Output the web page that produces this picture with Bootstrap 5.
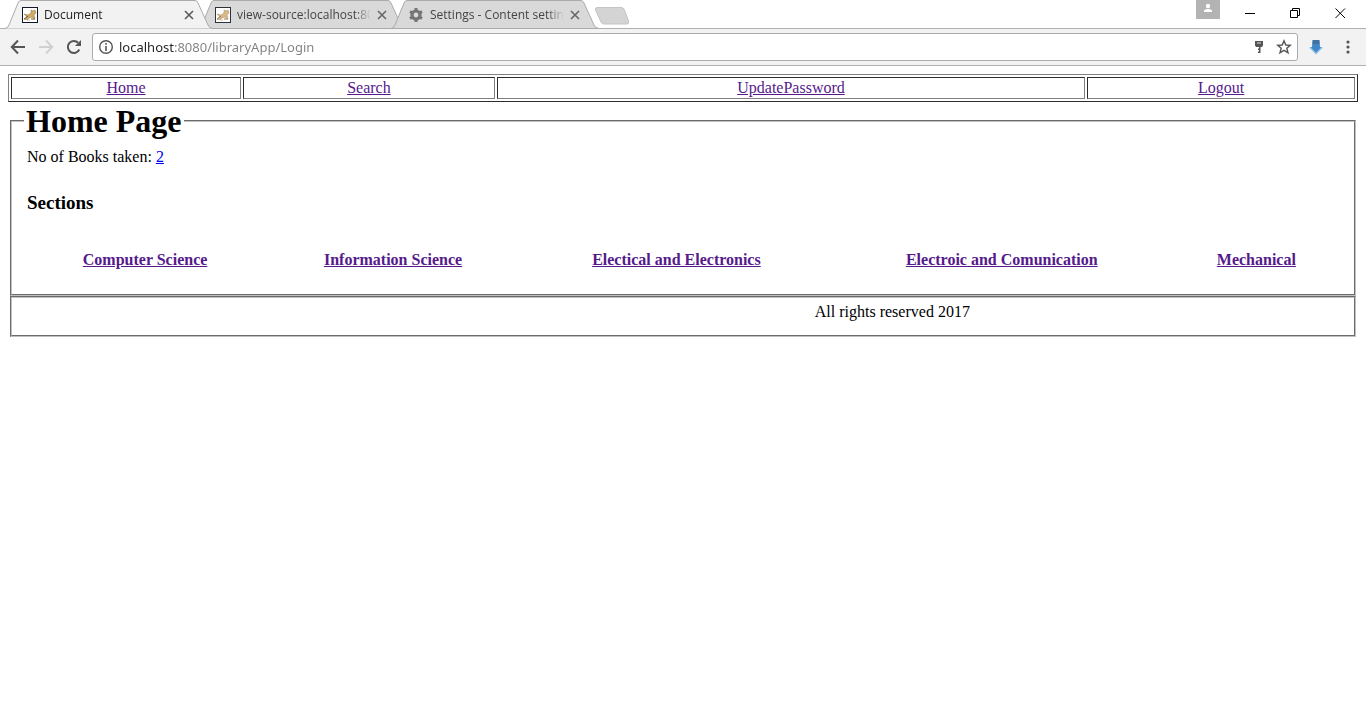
<!DOCTYPE html>
<html lang="en">
<head>
<meta charset="utf-8">
<meta name="viewport" content="width=device-width, initial-scale=1">
<title>Document</title>
<link href="https://cdn.jsdelivr.net/npm/bootstrap@5.3.0/dist/css/bootstrap.min.css" rel="stylesheet">
<style>
  body { font-family: "Liberation Serif", "Times New Roman", serif; font-size: 16px; line-height: 18px; color: #000; background: #fff; }
  .browser { font-family: "Open Sans", "Noto Sans", sans-serif; }
  .browser svg { display: block; flex: none; }
  .browser button { border: 0; background: none; padding: 0; flex: none; }

  /* tab strip */
  .strip { height: 29px; padding-left: 5px; border-bottom: 1px solid #b0b0b0; }
  .tab { width: 208px; height: 29px; margin-right: -15px; padding: 1px 19px 0 17px; font-size: 12px; color: #444; }
  .tab-shape { position: absolute; left: 0; top: 0; }
  .tab-shape path { fill: #d9d9d9; stroke: #ababab; }
  .tab.current { z-index: 2; color: #222; }
  .tab.current .tab-shape path { fill: #f2f2f2; }
  .tab-title { min-width: 0; margin: 0 6px 0 6px; overflow: hidden; white-space: nowrap; -webkit-mask-image: linear-gradient(90deg, #000 88%, transparent); mask-image: linear-gradient(90deg, #000 88%, transparent); }
  .tab > :not(.tab-shape) { position: relative; }
  .tab-new { margin: 7px 0 0 10px; }
  .user-btn { width: 24px; height: 19px; }
  .user-btn svg { background: #b3b3b3; }
  .window-btns { gap: 34px; padding: 8px 20px 0 25px; }

  /* toolbar */
  .toolbar { height: 37px; background: #f2f2f2; border-bottom: 1px solid #b0b0b0; padding: 0 10px 0 10px; }
  .nav-btns { gap: 12px; margin-right: 10px; }
  .omnibox { height: 28px; background: #fff; border: 1px solid #ababab; border-radius: 3px; padding: 0 5px; }
  .address { border: 0; outline: 0; padding: 0; min-width: 0; margin: 0 5px; font-family: "Noto Sans", sans-serif; font-size: 13px; height: 24px; color: transparent; background: linear-gradient(90deg, #222 56px, #808080 56px); -webkit-background-clip: text; background-clip: text; }
  .omnibox .key-btn { margin-right: 9px; }
  .download-btn { margin: 0 16px 0 10px; }

  /* page */
  .page { padding: 8px; }
  .page a { color: #551a8b; }
  .page a.fresh { color: #0000ee; }
  .menu-table { border-collapse: separate; border-spacing: 2px; border: 1px solid; border-color: #808080 #2c2c2c #2c2c2c #808080; }
  .menu-table td { border: 1px solid; border-color: #2c2c2c #808080 #808080 #2c2c2c; padding: 1px; text-align: center; }
  .box { border: 2px groove #c0c0c0; margin: 0 2px; padding: 0 12px; }
  .box-title { font-size: 32px; line-height: 38px; font-weight: bold; padding: 0 2px; margin: 0; }
  .box-body { padding: 8px 3px 25px; }
  .section-title { font-size: 19px; line-height: 22px; font-weight: bold; margin: 26px 0 37px; }
  .section-table th { text-align: center; padding: 0; }
  .rights { padding: 5px 0 14px 60%; }
</style>
</head>
<body>
<header class="browser">
  <div class="strip d-flex">
    <div class="tab current position-relative d-flex align-items-center">
      <svg class="tab-shape" width="208" height="29"><path d="M0 28.500L1 28Q3 27.500 4 25L13 3Q14 .5 16 .5H190Q192 .5 193 3L203 25Q204 28 208 28.500"/></svg>
      <svg width="16" height="16" viewBox="0 0 16 16"><rect x=".5" y=".5" width="15" height="15" fill="#fff" stroke="#101828"/><path d="M2 13 5 10 2 7 6 8 9 6 9 3 11 4 13 3 14 6 12 8 13 12 10 10 7 11 5 13 8 13" fill="#d0ab65" stroke="#8d7143" stroke-width=".5"/><path d="M2 12 6 9M9 12H13" stroke="#6f5732"/></svg>
      <span class="tab-title flex-grow-1">Document</span>
      <button type="button" aria-label="Close tab"><svg width="10" height="10" viewBox="0 0 10 10"><path d="M1 1 9 9M9 1 1 9" stroke="#5a5a5a" stroke-width="1.600"/></svg></button>
    </div>
    <div class="tab position-relative d-flex align-items-center">
      <svg class="tab-shape" width="208" height="29"><path d="M0 28.500L1 28Q3 27.500 4 25L13 3Q14 .5 16 .5H190Q192 .5 193 3L203 25Q204 28 208 28.500Z"/></svg>
      <svg width="16" height="16" viewBox="0 0 16 16"><rect x=".5" y=".5" width="15" height="15" fill="#fff" stroke="#2c333c"/><path d="M2 13 5 10 2 7 6 8 9 6 9 3 11 4 13 3 14 6 12 8 13 12 10 10 7 11 5 13 8 13" fill="#d9b988" stroke="#a58d66" stroke-width=".5"/><path d="M2 12 6 9M9 12H13" stroke="#8f7853"/></svg>
      <span class="tab-title flex-grow-1">view-source:localhost:8080</span>
      <button type="button" aria-label="Close tab"><svg width="10" height="10" viewBox="0 0 10 10"><path d="M1 1 9 9M9 1 1 9" stroke="#666" stroke-width="1.600"/></svg></button>
    </div>
    <div class="tab position-relative d-flex align-items-center">
      <svg class="tab-shape" width="208" height="29"><path d="M0 28.500L1 28Q3 27.500 4 25L13 3Q14 .5 16 .5H190Q192 .5 193 3L203 25Q204 28 208 28.500Z"/></svg>
      <svg width="16" height="16" viewBox="0 0 16 16"><circle cx="8" cy="8" r="4" fill="none" stroke="#757575" stroke-width="3.200"/><path d="M8 1V4M8 12V15M2 4.500 4.500 6M11.500 10 14 11.500M2 11.500 4.500 10M11.500 6 14 4.500" stroke="#757575" stroke-width="3"/></svg>
      <span class="tab-title flex-grow-1">Settings - Content settings</span>
      <button type="button" aria-label="Close tab"><svg width="10" height="10" viewBox="0 0 10 10"><path d="M1 1 9 9M9 1 1 9" stroke="#666" stroke-width="1.600"/></svg></button>
    </div>
    <button type="button" class="tab-new align-self-start" aria-label="New tab"><svg width="36" height="18"><path d="M3 .5H27Q29 .5 30 2L34.500 14Q35 17 33 17H10Q8 17 7 15L1.500 3Q1 .5 3 .5Z" fill="#d4d4d4" stroke="#c4c4c4"/></svg></button>
    <button type="button" class="user-btn ms-auto align-self-start" aria-label="User"><svg width="24" height="19"><circle cx="12" cy="6" r="2.200" fill="#fff"/><path d="M8 12V11Q8 9 12 9T16 11V12Z" fill="#fff"/></svg></button>
    <div class="window-btns d-flex align-self-start">
      <button type="button" aria-label="Minimize"><svg width="11" height="11"><path d="M0 5.500H10" stroke="#000"/></svg></button>
      <button type="button" aria-label="Restore"><svg width="11" height="11"><path d="M.5 2.500H7.500V9.500H.5ZM2.500 2.500V.5H9.500V7.500H7.500" fill="none" stroke="#000"/></svg></button>
      <button type="button" aria-label="Close"><svg width="11" height="11"><path d="M.5 .5 10 10M10 .5 .5 10" stroke="#000"/></svg></button>
    </div>
  </div>
  <div class="toolbar d-flex align-items-center">
    <div class="nav-btns d-flex">
      <button type="button" aria-label="Back"><svg width="16" height="16" viewBox="0 0 16 16"><path d="M15 8H2M8 1.500 1.800 8 8 14.500" fill="none" stroke="#555" stroke-width="2"/></svg></button>
      <button type="button" aria-label="Forward"><svg width="16" height="16" viewBox="0 0 16 16"><path d="M1 8H14M8 1.500 14.200 8 8 14.500" fill="none" stroke="#d0d0d0" stroke-width="2"/></svg></button>
      <button type="button" aria-label="Reload"><svg width="16" height="16" viewBox="0 0 16 16"><path d="M13.300 10.500A6 6 0 1 1 12.200 3.800" fill="none" stroke="#555" stroke-width="2"/><path d="M15 1V7H9Z" fill="#555"/></svg></button>
    </div>
    <form class="omnibox d-flex align-items-center flex-grow-1">
      <svg width="16" height="16" viewBox="0 0 16 16"><circle cx="8" cy="8" r="6.300" fill="none" stroke="#555" stroke-width="1.400"/><path d="M8 7V12M8 4V5.700" stroke="#555" stroke-width="1.600"/></svg>
      <input class="address flex-grow-1" type="text" aria-label="Address" value="localhost:8080/libraryApp/Login">
      <button type="button" class="key-btn" aria-label="Saved passwords"><svg width="16" height="16" viewBox="0 0 16 16"><path d="M4 2H12V6.500L11 8H9.500V14H7V12.500H8V11H7V9.500H8V8H5L4 6.500Z" fill="#555"/><path d="M6 4H10" stroke="#ddd"/></svg></button>
      <button type="button" aria-label="Bookmark this page"><svg width="16" height="16" viewBox="0 0 16 16"><path d="M8 1.800 9.800 6 14.300 6.300 10.800 9.300 12 13.800 8 11.400 4 13.800 5.200 9.300 1.700 6.300 6.200 6Z" fill="none" stroke="#555" stroke-width="1.400"/></svg></button>
    </form>
    <button type="button" class="download-btn" aria-label="Downloads"><svg width="16" height="16" viewBox="0 0 16 16"><path d="M1 8.500 8 15.500 15 8.500 12 8H4Z" fill="#8fc0e8"/><path d="M4.500 1H11.500L12 8H13.500L8 13.500 2.500 8H4Z" fill="#3f87c6"/><path d="M5 1H11L11.500 5H4.500Z" fill="#41729f"/></svg></button>
    <button type="button" aria-label="Menu"><svg width="16" height="16"><g fill="#555"><circle cx="8" cy="3" r="1.600"/><circle cx="8" cy="8" r="1.600"/><circle cx="8" cy="13" r="1.600"/></g></svg></button>
  </div>
</header>

<main class="page">
  <table class="menu-table w-100">
    <colgroup><col style="width:17.2%"><col style="width:18.8%"><col style="width:44%"><col style="width:20%"></colgroup>
    <tr><td><a href="#">Home</a></td><td><a href="#">Search</a></td><td><a href="#">UpdatePassword</a></td><td><a href="#">Logout</a></td></tr>
  </table>
  <fieldset class="box">
    <legend class="box-title float-none w-auto">Home Page</legend>
    <div class="box-body">
      <div>No of Books taken: <a class="fresh" href="#">2</a></div>
      <h3 class="section-title">Sections</h3>
      <table class="section-table w-100">
        <colgroup><col style="width:18%"><col style="width:19.8%"><col style="width:23.4%"><col style="width:26.2%"><col style="width:12.6%"></colgroup>
        <tr>
          <th><a href="#">Computer Science</a></th>
          <th><a href="#">Information Science</a></th>
          <th><a href="#">Electical and Electronics</a></th>
          <th><a href="#">Electroic and Comunication</a></th>
          <th><a href="#">Mechanical</a></th>
        </tr>
      </table>
    </div>
  </fieldset>
  <fieldset class="box">
    <div class="rights">All rights reserved 2017</div>
  </fieldset>
</main>
<script src="https://cdn.jsdelivr.net/npm/bootstrap@5.3.0/dist/js/bootstrap.bundle.min.js"></script>
</body>
</html>
